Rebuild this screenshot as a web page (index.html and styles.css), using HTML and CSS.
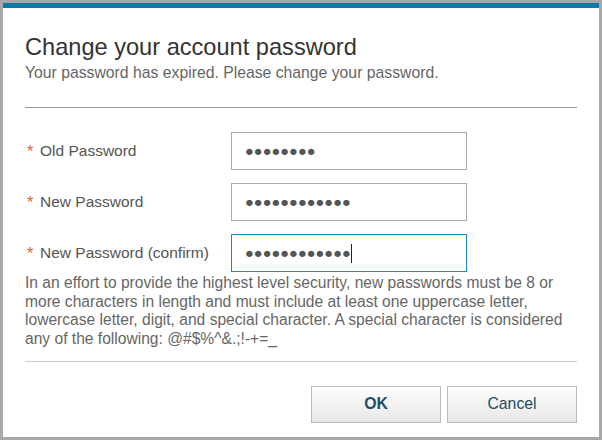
FILE: index.html
```html
<!DOCTYPE html>
<html lang="en">
<head>
<meta charset="utf-8">
<title>Change your account password</title>
<link rel="stylesheet" href="styles.css">
</head>
<body>
<div class="dialog">
  <div class="header">
    <h1 class="title">Change your account password</h1>
    <p class="subtitle">Your password has expired. Please change your password.</p>
  </div>
  <div class="form">
    <div class="row">
      <label class="label"><span class="req">*</span>Old Password</label>
      <div class="field"><span class="dots">●●●●●●●●</span></div>
    </div>
    <div class="row">
      <label class="label"><span class="req">*</span>New Password</label>
      <div class="field"><span class="dots">●●●●●●●●●●●●</span></div>
    </div>
    <div class="row">
      <label class="label"><span class="req">*</span>New Password (confirm)</label>
      <div class="field focused"><span class="dots">●●●●●●●●●●●●</span><span class="caret"></span></div>
    </div>
    <p class="help">In an effort to provide the highest level security, new passwords must be 8 or more characters in length and must include at least one uppercase letter, lowercase letter, digit, and special character. A special character is considered any of the following: @#$%^&amp;.;!-+=_</p>
  </div>
  <div class="footer">
    <button class="btn btn-primary">OK</button>
    <button class="btn">Cancel</button>
  </div>
</div>
</body>
</html>
```

FILE: styles.css
```css
html, body {
  margin: 0;
  padding: 0;
}
body {
  background: #a8a8a8;
  width: 602px;
  height: 440px;
  padding: 3px;
  box-sizing: border-box;
  font-family: "Liberation Sans", Arial, sans-serif;
}
.dialog {
  background: #fff;
  border-top: 5px solid #0f7aa8;
  height: 434px;
  box-sizing: border-box;
  padding: 25px 22px 0 22px;
  display: flex;
  flex-direction: column;
}
.header {
  border-bottom: 1px solid #999;
  padding-bottom: 25px;
}
.title {
  margin: 0;
  font-size: 23.6px;
  line-height: 28px;
  font-weight: normal;
  color: #333;
}
.subtitle {
  margin: 2px 0 0 0;
  font-size: 15.75px;
  line-height: 19px;
  color: #666;
}
.form {
  padding-top: 24px;
  border-bottom: 1px solid #ccc;
  padding-bottom: 12px;
}
.row {
  display: flex;
  align-items: center;
  margin-bottom: 13px;
}
.row:nth-child(3) {
  margin-bottom: 2px;
}
.label {
  width: 206px;
  font-size: 15.5px;
  color: #555;
  display: flex;
  align-items: center;
}
.req {
  color: #e0672e;
  font-size: 16.5px;
  width: 15px;
  padding-left: 2px;
  box-sizing: border-box;
}
.field {
  width: 236px;
  height: 38px;
  box-sizing: border-box;
  border: 1px solid #aaa;
  padding-left: 13px;
  display: flex;
  align-items: center;
}
.field.focused {
  border-color: #1a8cbd;
}
.dots {
  font-family: "Liberation Sans", Arial, sans-serif;
  font-size: 14.6px;
  color: #555;
}
.caret {
  width: 1px;
  height: 19px;
  background: #222;
}
.help {
  margin: 0;
  font-size: 15.6px;
  line-height: 18.7px;
  color: #666;
}
.footer {
  display: flex;
  justify-content: flex-end;
  gap: 6px;
  padding-top: 24px;
}
.btn {
  width: 130px;
  height: 37px;
  border: 1px solid #bbb;
  background: linear-gradient(#fdfdfd, #e8e8e8);
  font-family: "Liberation Sans", Arial, sans-serif;
  font-size: 15.75px;
  color: #1e4d66;
  padding: 0;
}
.btn-primary {
  font-weight: bold;
}
```
